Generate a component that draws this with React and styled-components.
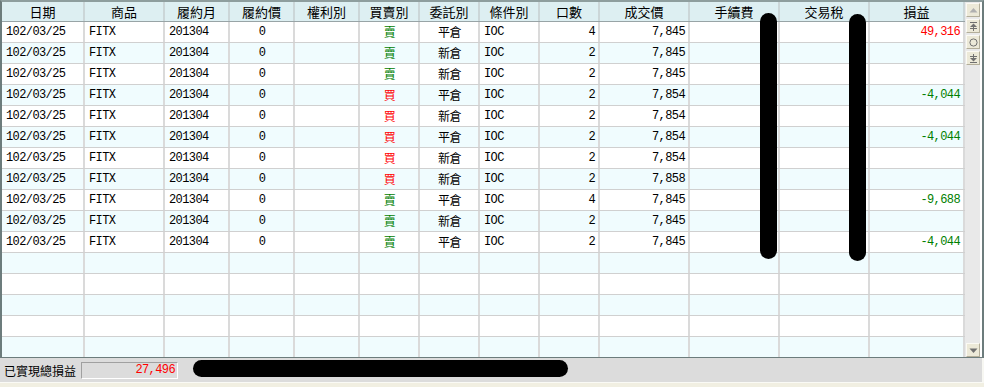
import styled, { createGlobalStyle } from "styled-components"

const GlobalStyle = createGlobalStyle`
  html, body {
    margin: 0;
    padding: 0;
    background: #f1efe2;
  }
`

const COLS = "83px 80px 65px 65px 65px 60px 60px 60px 60px 90px 90px 90px 95px"

const columns = [
  { title: "日期", key: "date", align: "left" },
  { title: "商品", key: "product", align: "left" },
  { title: "履約月", key: "month", align: "left" },
  { title: "履約價", key: "strike", align: "center" },
  { title: "權利別", key: "right", align: "center" },
  { title: "買賣別", key: "side", align: "center" },
  { title: "委託別", key: "kind", align: "center" },
  { title: "條件別", key: "cond", align: "left" },
  { title: "口數", key: "qty", align: "right" },
  { title: "成交價", key: "price", align: "right" },
  { title: "手續費", key: "fee", align: "right" },
  { title: "交易稅", key: "tax", align: "right" },
  { title: "損益", key: "pnl", align: "right" }
]

const trades = [
  ["賣", "平倉", 4, "7,845", "49,316"],
  ["賣", "新倉", 2, "7,845", ""],
  ["賣", "新倉", 2, "7,845", ""],
  ["買", "平倉", 2, "7,854", "-4,044"],
  ["買", "新倉", 2, "7,854", ""],
  ["買", "平倉", 2, "7,854", "-4,044"],
  ["買", "新倉", 2, "7,854", ""],
  ["買", "新倉", 2, "7,858", ""],
  ["賣", "平倉", 4, "7,845", "-9,688"],
  ["賣", "新倉", 2, "7,845", ""],
  ["賣", "平倉", 2, "7,845", "-4,044"]
].map(([side, kind, qty, price, pnl]) => ({
  date: "102/03/25",
  product: "FITX",
  month: "201304",
  strike: "0",
  right: "",
  side,
  kind,
  cond: "IOC",
  qty,
  price,
  fee: "",
  tax: "",
  pnl
}))

const RED = "#ff0000"
const GREEN = "#008000"

function cellColor(key, value) {
  if (key === "side") return value === "買" ? RED : GREEN
  if (key === "pnl") return String(value).startsWith("-") ? GREEN : RED
  return "#000"
}

const Screen = styled.div`
  position: relative;
  width: 984px;
  height: 387px;
  overflow: hidden;
  background: #f1efe2;
`

const Frame = styled.div`
  width: 980px;
  display: grid;
  grid-template-columns: 963px 15px;
  border-top: 2px solid #8e9e9e;
  border-left: 2px solid #6c7c7c;
  border-right: 2px solid #6c7c7c;
  border-bottom: 1px solid #6c7c7c;
  background: #fff;
`

const Table = styled.div`
  display: flex;
  flex-direction: column;
  height: 355px;
  overflow: hidden;
`

const HeaderRow = styled.div`
  display: grid;
  grid-template-columns: ${COLS};
  height: 19px;
  background: #ddeff2;
  border-bottom: 1px solid #98a4a6;
`

const HeaderCell = styled.div`
  display: flex;
  align-items: center;
  justify-content: center;
  border-right: 2px solid #cbd6d8;
  font-family: "Noto Sans CJK TC", "Liberation Sans", sans-serif;
  font-size: 13px;
  color: #000;
`

const Row = styled.div`
  display: grid;
  grid-template-columns: ${COLS};
  flex: 0 0 20px;
  border-bottom: 1px solid #d0d0d0;
  background: ${(p) => (p.$alt ? "#f0fcfe" : "#ffffff")};
`

const Cell = styled.div`
  display: flex;
  align-items: center;
  justify-content: ${(p) =>
    p.$align === "right" ? "flex-end" : p.$align === "center" ? "center" : "flex-start"};
  padding: 0 3px 0 4px;
  border-right: 2px solid #dadada;
  font-family: "Liberation Mono", "Noto Sans CJK TC", monospace;
  font-size: 12px;
  letter-spacing: -0.6px;
  color: ${(p) => p.$color};
  white-space: nowrap;
  overflow: hidden;
`

const ScrollBar = styled.div`
  display: flex;
  flex-direction: column;
  justify-content: space-between;
  background: #e9e9e9;
  padding: 1px 0 0 1px;
`

const ButtonStack = styled.div`
  display: flex;
  flex-direction: column;
  gap: 2px;
`

const ScrollButton = styled.div`
  width: 14px;
  height: 14px;
  display: flex;
  align-items: center;
  justify-content: center;
  background: #ece9d8;
  border-top: 1px solid #fbfaf4;
  border-left: 1px solid #fbfaf4;
  border-right: 1px solid #b3ae9a;
  border-bottom: 1px solid #b3ae9a;
  box-sizing: border-box;
  color: ${(p) => (p.$disabled ? "#b0b0b0" : "#707070")};
`

const Footer = styled.div`
  height: 24px;
  display: flex;
  align-items: center;
  gap: 5px;
  padding-left: 4px;
  background: #dcdcdc;
  border-bottom: 1px solid #fafaf6;
  border-right: 2px solid #f7f7f2;
  width: 978px;
`

const FooterLabel = styled.span`
  font-family: "Noto Sans CJK TC", "Liberation Sans", sans-serif;
  font-size: 12px;
  color: #000;
`

const TotalBox = styled.div`
  width: 93px;
  height: 15px;
  display: flex;
  align-items: center;
  justify-content: flex-end;
  padding-right: 2px;
  border-top: 1px solid #a0a0a0;
  border-left: 1px solid #a0a0a0;
  border-bottom: 1px solid #ffffff;
  border-right: 1px solid #ffffff;
  font-family: "Liberation Mono", monospace;
  font-size: 12px;
  letter-spacing: -0.6px;
  color: ${RED};
`

const Redaction = styled.div`
  position: absolute;
  background: #000;
  border-radius: 9px;
  left: ${(p) => p.$x}px;
  top: ${(p) => p.$y}px;
  width: ${(p) => p.$w}px;
  height: ${(p) => p.$h}px;
`

const Icon = ({ kind }) => (
  <svg width="9" height="9" viewBox="0 0 9 9" fill="currentColor">
    {kind === "up" && <path d="M4.5 2 L8.5 6.5 L0.5 6.5 Z" />}
    {kind === "down" && <path d="M0.5 2.5 L8.5 2.5 L4.5 7 Z" />}
    {kind === "top" && (
      <>
        <rect x="1" y="0" width="7" height="1" />
        <path d="M4.5 1.5 L8 5 L1 5 Z" />
        <rect x="1" y="6" width="7" height="1" />
        <rect x="4" y="5" width="1" height="4" />
      </>
    )}
    {kind === "bottom" && (
      <>
        <rect x="4" y="0" width="1" height="4" />
        <rect x="1" y="2" width="7" height="1" />
        <path d="M1 4 L8 4 L4.5 7.5 Z" />
        <rect x="1" y="8" width="7" height="1" />
      </>
    )}
    {kind === "mid" && <circle cx="4.5" cy="4.5" r="3.6" fill="none" stroke="currentColor" />}
  </svg>
)

export default function App() {
  const rows = Array.from({ length: 16 }, (_, i) => trades[i] || null)

  return (
    <Screen>
      <GlobalStyle />
      <Frame>
        <Table>
          <HeaderRow>
            {columns.map((c) => (
              <HeaderCell key={c.key}>{c.title}</HeaderCell>
            ))}
          </HeaderRow>
          {rows.map((row, i) => (
            <Row key={i} $alt={i % 2 === 1}>
              {columns.map((c) => (
                <Cell key={c.key} $align={c.align} $color={row ? cellColor(c.key, row[c.key]) : "#000"}>
                  {row ? row[c.key] : ""}
                </Cell>
              ))}
            </Row>
          ))}
        </Table>
        <ScrollBar>
          <ButtonStack>
            <ScrollButton $disabled>
              <Icon kind="up" />
            </ScrollButton>
            <ScrollButton>
              <Icon kind="top" />
            </ScrollButton>
            <ScrollButton>
              <Icon kind="mid" />
            </ScrollButton>
            <ScrollButton>
              <Icon kind="bottom" />
            </ScrollButton>
          </ButtonStack>
          <ScrollButton>
            <Icon kind="down" />
          </ScrollButton>
        </ScrollBar>
      </Frame>
      <Footer>
        <FooterLabel>已實現總損益</FooterLabel>
        <TotalBox>27,496</TotalBox>
      </Footer>

      <Redaction $x={760} $y={13} $w={17} $h={246} />
      <Redaction $x={849} $y={14} $w={17} $h={247} />
      <Redaction $x={193} $y={360} $w={375} $h={17} />
    </Screen>
  )
}
